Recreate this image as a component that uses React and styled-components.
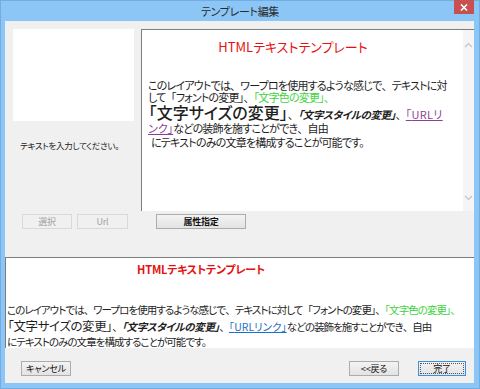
import React from "react";
import styled, { createGlobalStyle } from "styled-components";

const GlobalStyle = createGlobalStyle`
  html, body { margin: 0; padding: 0; background: #8cc6f6; }
  body {
    font-family: "Noto Sans CJK JP", "Noto Sans", sans-serif;
    font-feature-settings: "palt";
  }
`;

const Window = styled.div`
  width: 480px;
  height: 389px;
  box-sizing: border-box;
  background: #8cc6f6;
  border: 1px solid #72ace0;
  display: flex;
  flex-direction: column;
`;

const TitleBar = styled.div`
  height: 20px;
  display: flex;
  align-items: center;
  justify-content: center;
  position: relative;
`;

const TitleText = styled.div`
  font-size: 11px;
  color: #2b2b2b;
  letter-spacing: -0.3px;
`;

const CloseButton = styled.div`
  position: absolute;
  right: 5px;
  top: -1px;
  width: 20px;
  height: 14px;
  background: #c75050;
  display: flex;
  align-items: center;
  justify-content: center;
`;

const Client = styled.div`
  margin: 0 5px 5px 4px;
  flex: 1;
  background: #f0f0f0;
  display: flex;
  flex-direction: column;
  padding-top: 8px;
`;

const TopArea = styled.div`
  display: flex;
  height: 182px;
`;

const LeftCol = styled.div`
  width: 121px;
  margin-left: 8px;
  margin-right: 7px;
  display: flex;
  flex-direction: column;
`;

const PreviewBox = styled.div`
  height: 92px;
  background: #fff;
`;

const Hint = styled.div`
  margin-top: 18px;
  margin-left: 7px;
  font-size: 8.5px;
  line-height: 12px;
  color: #222;
  letter-spacing: -0.3px;
  white-space: nowrap;
`;

const EditorPane = styled.div`
  flex: 1;
  display: flex;
  background: #fff;
  border-top: 1px solid #7d7d7d;
  border-left: 1px solid #7d7d7d;
`;

const EditorContent = styled.div`
  flex: 1;
  padding-top: 10px;
  color: #1e1e1e;
`;

const Heading = styled.div`
  width: ${(p) => p.$w}px;
  text-align: center;
  color: #e51010;
  font-size: ${(p) => p.$size}px;
  font-weight: ${(p) => (p.$bold ? 700 : 400)};
  line-height: 14px;
  letter-spacing: ${(p) => p.$ls}px;
  white-space: nowrap;
`;

const Body = styled.div`
  margin-top: ${(p) => p.$mt}px;
  padding-left: ${(p) => p.$pl}px;
  font-size: ${(p) => p.$size}px;
  letter-spacing: ${(p) => p.$ls}px;
  color: #1e1e1e;
`;

const Line = styled.div`
  height: ${(p) => p.$h}px;
  line-height: ${(p) => p.$h}px;
  white-space: nowrap;
  padding-left: ${(p) => p.$indent || 0}px;
`;

const Big = styled.span`
  display: inline-block;
  font-size: ${(p) => p.$size}px;
  font-weight: ${(p) => p.$weight || 500};
  letter-spacing: ${(p) => p.$ls || 0}px;
  margin-left: ${(p) => (p.$lead ? "-0.45em" : "0")};
`;

const Green = styled.span`
  color: #3fd33f;
`;

const Styled = styled.span`
  font-style: italic;
  font-weight: 700;
  font-size: ${(p) => p.$size}px;
  letter-spacing: -0.4px;
`;

const Link = styled.span`
  color: ${(p) => p.$color};
  text-decoration: underline;
  text-underline-offset: 1px;
  letter-spacing: ${(p) => p.$ls || 0}px;
`;

const Punct = styled.span`
  font-feature-settings: normal;
`;

/* opening brackets and commas keep their full width, as in the original face */
const J = ({ children }) =>
  String(children)
    .split(/([「、])/)
    .filter(Boolean)
    .map((s, i) =>
      /^[「、]$/.test(s) ? <Punct key={i}>{s}</Punct> : <React.Fragment key={i}>{s}</React.Fragment>
    );

const ScrollBar = styled.div`
  width: 11px;
  background: #f5f5f5;
  display: flex;
  flex-direction: column;
  justify-content: space-between;
  align-items: center;
  padding: 12px 0 10px;
`;

const ToolRow = styled.div`
  display: flex;
  align-items: center;
  margin-top: 3px;
  padding-left: 17px;
  height: 15px;
`;

const Button = styled.button`
  box-sizing: border-box;
  width: ${(p) => p.$w}px;
  height: 15px;
  margin-left: ${(p) => p.$ml || 0}px;
  padding: 0;
  font-family: inherit;
  font-feature-settings: "palt";
  font-size: 9px;
  line-height: 13px;
  color: ${(p) => (p.disabled ? "#a3a3a3" : "#111")};
  font-weight: ${(p) => (p.$strong ? 700 : 400)};
  background: ${(p) =>
    p.disabled ? "#f0f0f0" : "linear-gradient(#f3f3f3, #e3e3e3)"};
  border: 1px solid ${(p) => (p.disabled ? "#d9d9d9" : p.$default ? "#3c8ee0" : "#acacac")};
  outline: ${(p) => (p.$default ? "1px dotted #555" : "none")};
  outline-offset: -3px;
  letter-spacing: -0.2px;
`;

const PreviewPane = styled.div`
  margin-top: 28px;
  height: 91px;
  box-sizing: border-box;
  background: #fff;
  border-top: 1px solid #7d7d7d;
  border-left: 1px solid #7d7d7d;
  padding-top: 4px;
`;

const Footer = styled.div`
  display: flex;
  align-items: center;
  padding: 13px 8px 0 16px;
`;

const Spacer = styled.div`
  flex: 1;
`;

export default function App() {
  return (
    <>
      <GlobalStyle />
      <Window>
        <TitleBar>
          <TitleText>テンプレート編集</TitleText>
          <CloseButton>
            <svg width="8" height="7" viewBox="0 0 8 7">
              <path d="M1 0.5 L7 6.5 M7 0.5 L1 6.5" stroke="#fff" strokeWidth="1.6" />
            </svg>
          </CloseButton>
        </TitleBar>
        <Client>
          <TopArea>
            <LeftCol>
              <PreviewBox />
              <Hint>テキストを入力してください。</Hint>
            </LeftCol>
            <EditorPane>
              <EditorContent>
                <Heading $w={302} $size={13} $ls={0}>
                  HTMLテキストテンプレート
                </Heading>
                <Body $mt={25} $pl={6} $size={11} $ls={-0.8}>
                  <Line $h={12}>
                    <J>このレイアウトでは、ワープロを使用するような感じで、テキストに対</J>
                  </Line>
                  <Line $h={12}>
                    <J>して「フォントの変更」、</J>
                    <Green><J>「文字色の変更」、</J></Green>
                  </Line>
                  <Line $h={18}>
                    <Big $size={16} $lead><J>「文字サイズの変更」</J></Big>
                    <J>、</J>
                    <Styled $size={10.5}><J>「文字スタイルの変更」</J></Styled>
                    <J>、</J>
                    <Link $color="#8a3f94" $ls={0.3}><J>「URLリ</J></Link>
                  </Line>
                  <Line $h={14}>
                    <Link $color="#8a3f94"><J>ンク」</J></Link>
                    <J>などの装飾を施すことができ、自由</J>
                  </Line>
                  <Line $h={14} $indent={3}>
                    にテキストのみの文章を構成することが可能です。
                  </Line>
                </Body>
              </EditorContent>
              <ScrollBar>
                <svg width="9" height="6" viewBox="0 0 9 6">
                  <path d="M1 5 L4.5 1.5 L8 5" stroke="#c4c4c4" strokeWidth="1.2" fill="none" />
                </svg>
                <svg width="9" height="6" viewBox="0 0 9 6">
                  <path d="M1 1 L4.5 4.5 L8 1" stroke="#c4c4c4" strokeWidth="1.2" fill="none" />
                </svg>
              </ScrollBar>
            </EditorPane>
          </TopArea>
          <ToolRow>
            <Button $w={50} disabled>選択</Button>
            <Button $w={51} $ml={5} disabled>Url</Button>
            <Button $w={90} $ml={28} $strong>属性指定</Button>
          </ToolRow>
          <PreviewPane>
            <Heading $w={390} $size={11} $bold $ls={-0.2}>
              HTMLテキストテンプレート
            </Heading>
            <Body $mt={26} $pl={1} $size={10.5} $ls={-0.95}>
              <Line $h={16}>
                <J>このレイアウトでは、ワープロを使用するような感じで、テキストに対して「フォントの変更」、</J>
                <Green><J>「文字色の変更」、</J></Green>
              </Line>
              <Line $h={16}>
                <Big $size={12.5} $weight={400} $ls={-0.4} $lead><J>「文字サイズの変更」</J></Big>
                <J>、</J>
                <Styled $size={10.5}><J>「文字スタイルの変更」</J></Styled>
                <J>、</J>
                <Link $color="#1f6fc4" $ls={0}><J>「URLリンク」</J></Link>
                <J>などの装飾を施すことができ、自由</J>
              </Line>
              <Line $h={16}>にテキストのみの文章を構成することが可能です。</Line>
            </Body>
          </PreviewPane>
          <Footer>
            <Button $w={50}>キャンセル</Button>
            <Spacer />
            <Button $w={50}>&lt;&lt;戻る</Button>
            <Button $w={48} $ml={19} $default>完了</Button>
          </Footer>
        </Client>
      </Window>
    </>
  );
}
